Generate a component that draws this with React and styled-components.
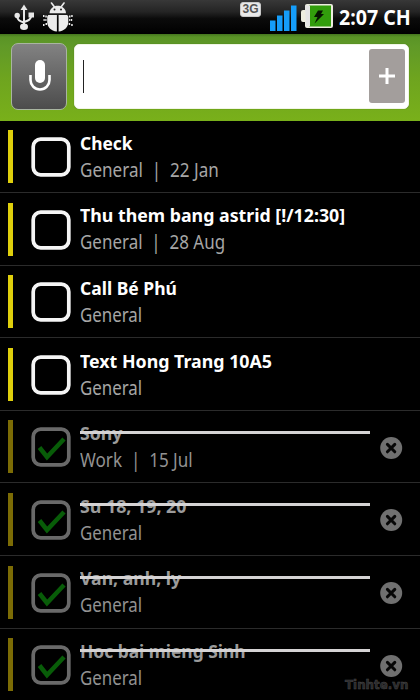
import React from "react";
import styled, { createGlobalStyle } from "styled-components";

const GlobalStyle = createGlobalStyle`
  * { box-sizing: border-box; }
  body { margin: 0; background: #000; overflow: hidden; }
`;

const Screen = styled.main`
  position: relative;
  width: 420px;
  height: 700px;
  overflow: hidden;
  background: #000;
  color: #fff;
  font-family: "Noto Sans", "Open Sans", sans-serif;
`;

const StatusBar = styled.header`
  display: flex;
  align-items: flex-start;
  height: 34px;
  padding-left: 14px;
  background: linear-gradient(#383838 0, #242424 35%, #0b0b0b 55%, #000 100%);
`;

const StatusIcon = styled.svg`
  display: block;
  flex: none;
  width: ${(p) => p.$w}px;
  height: ${(p) => p.$h}px;
  margin: ${(p) => p.$top}px 0 0 ${(p) => p.$left || 0}px;
`;

const NetworkBadge = styled.div`
  width: 21px;
  height: 15px;
  margin: 2px 0 0 167px;
  border: 1px solid #c9c9c9;
  border-radius: 3px;
  background: #e9e9e9;
  color: #555;
  font: bold 12px/13px "Liberation Sans", sans-serif;
  text-align: center;
`;

const Clock = styled.time`
  margin: 3px 0 0 6px;
  font-size: 20.5px;
  line-height: 28px;
  font-weight: 700;
  white-space: nowrap;
  transform: scaleX(${(p) => p.$fit});
  transform-origin: left;
`;

const QuickAdd = styled.section`
  display: flex;
  height: 86.5px;
  padding: 9px 11px 0;
  gap: 7px;
  background: linear-gradient(#45751f 0, #5a9426 3px, #609928 12px, #6ea41f 50%, #79b01a 100%);
`;

const VoiceButton = styled.button`
  display: flex;
  align-items: center;
  justify-content: center;
  width: 56px;
  height: 67px;
  padding: 0 0 2px 1px;
  border: 1.5px solid #a9b5a1;
  border-radius: 7px;
  background: linear-gradient(#828282, #4c4c4c);
`;

const InputBox = styled.div`
  display: flex;
  align-items: center;
  justify-content: space-between;
  width: 335px;
  height: 65px;
  margin-top: 1px;
  padding: 0 3px 1px 8px;
  border: 1px solid #f0f5e5;
  border-radius: 5px;
  background: #fff;
  box-shadow: 0 0 1px #3f6912;
`;

const Caret = styled.span`
  width: 1px;
  height: 33px;
  background: #222;
`;

const AddButton = styled.button`
  display: flex;
  align-items: center;
  justify-content: center;
  width: 36px;
  height: 54px;
  padding: 0;
  border: 0;
  border-radius: 3px;
  background: #a39e9c;
`;

const TaskList = styled.ul`
  margin: 0;
  padding: 0;
  list-style: none;
`;

const TaskRow = styled.li`
  display: flex;
  height: 72.6px;
  padding-left: 8px;
  border-bottom: 1px solid #2b2b2b;
`;

const Priority = styled.span`
  width: 5px;
  height: 53px;
  margin-top: 9.5px;
  background: ${(p) => (p.$done ? "#7c6c05" : "#dfcf0c")};
`;

const CheckIcon = styled.svg`
  width: 40px;
  height: 40px;
  margin: 16.5px 0 0 17.5px;
`;

const TaskBody = styled.div`
  position: relative;
  width: 290px;
  margin-left: 9.5px;
  padding-top: 8.3px;
`;

const Title = styled.div`
  width: max-content;
  font-size: 18.5px;
  line-height: 27px;
  font-weight: 700;
  white-space: pre;
  color: ${(p) => (p.$done ? "#9b9b9b" : "#fff")};
  transform: scaleX(${(p) => p.$fit});
  transform-origin: left;
`;

const Meta = styled.div`
  width: max-content;
  font-size: 19.3px;
  line-height: 27px;
  white-space: pre;
  color: ${(p) => (p.$done ? "#929292" : "#a6a6a6")};
  transform: scaleX(${(p) => p.$fit});
  transform-origin: left;
`;

const Strike = styled.span`
  position: absolute;
  top: 20px;
  left: 0;
  width: 290px;
  height: 3px;
  background: #d5d3d4;
`;

const RemoveIcon = styled.svg`
  width: 24px;
  height: 24px;
  margin: 25px 0 0 9px;
`;

const Watermark = styled.div`
  position: absolute;
  left: 345px;
  top: 675px;
  color: #29292b;
  font: bold 12.5px/20px "DejaVu Sans", sans-serif;
  -webkit-text-stroke: 0.5px #484848;
  transform: scaleX(${(p) => p.$fit});
  transform-origin: left;
`;

const tasks = [
  { title: "Check", meta: "General  |  22 Jan", tf: 0.938, mf: 0.885 },
  { title: "Thu them bang astrid [!/12:30]", meta: "General  |  28 Aug", tf: 0.96, mf: 0.88 },
  { title: "Call Bé Phú", meta: "General", tf: 0.945, mf: 0.875 },
  { title: "Text Hong Trang 10A5", meta: "General", tf: 0.962, mf: 0.875 },
  { title: "Sony", meta: "Work  |  15 Jul", done: true, tf: 0.955, mf: 0.885 },
  { title: "Su 18, 19, 20", meta: "General", done: true, tf: 0.962, mf: 0.875 },
  { title: "Van, anh, ly", meta: "General", done: true, tf: 0.952, mf: 0.875 },
  { title: "Hoc bai mieng Sinh", meta: "General", done: true, tf: 0.94, mf: 0.875 },
];

function Usb() {
  return (
    <StatusIcon $w={20} $h={27} $top={4} viewBox="0 0 20 27" fill="none" stroke="#e8e8e8" strokeWidth="2">
      <path d="M10 4v19M3.300 12c0 4 2.200 5 6.700 6.500M17.300 11c0 4.500-3 5.500-7.300 7" />
      <path d="M10 .5 13.500 6h-7z" fill="#e8e8e8" stroke="none" />
      <circle cx="3.200" cy="11.500" r="2.700" fill="#e8e8e8" stroke="none" />
      <path d="M14.500 8.500H20v5h-5.500z" fill="#e8e8e8" stroke="none" />
      <ellipse cx="10" cy="22.700" rx="4" ry="3.300" fill="#e8e8e8" stroke="none" />
    </StatusIcon>
  );
}

function DebugBug() {
  return (
    <StatusIcon $w={30} $h={30} $top={2} $left={9} viewBox="0 0 30 30" fill="#ececec">
      <path d="M8.500 1l3 4M21 1l-3 4" stroke="#ececec" strokeWidth="1.600" strokeLinecap="round" />
      <path d="M6.500 11.300C7 1.300 22.500 1.300 23 11.300z" />
      <circle cx="11.500" cy="7.500" r="1" fill="#222" />
      <circle cx="18" cy="7.500" r="1" fill="#222" />
      <path d="M5.300 13h8.600v16.500C8 29 4.200 25 4.200 20v-5.500zM15.600 13h8.600l1.100 1.500V20c0 5-3.800 9-9.700 9.500z" />
      <path d="M0 13h1.500v2H0zM2.300 13.500h1.500v2H2.300zM.5 17h1.200v2H.5zM2.300 17h1.200v2H2.300zM0 22h1.500v2H0zM2.500 21h1.500v2H2.500zM28.200 13h1.500v2h-1.500zM26 13.500h1.500v2H26zM28 17h1.200v2H28zM26.200 17h1.200v2h-1.200zM28.200 22h1.500v2h-1.500zM25.700 21h1.500v2h-1.500z" />
    </StatusIcon>
  );
}

function Signal() {
  return (
    <StatusIcon $w={27} $h={27} $top={5} $left={9} viewBox="0 0 27 27" fill="#159dfa">
      <path d="M0 15.500h5.500V26H0zM7 10.500h5.500V26H7zM14 5.500h5.500V26H14zM21 .5h5.500V26H21z" />
    </StatusIcon>
  );
}

function Battery() {
  return (
    <StatusIcon $w={32} $h={26} $top={3} $left={3.5} viewBox="0 0 32 26">
      <path d="M6 1h24q2 0 2 2v20q0 2-2 2H6q-2 0-2-2v-4H2q-2 0-2-2V9q0-2 2-2h2V3q0-2 2-2z" fill="#ededdf" />
      <path d="M8 2.500h22v21H8z" fill="#329d0c" />
      <path d="M4 2.500h5v21H5z" fill="#e5e5e5" />
      <path d="M17 7.500h5l-2 3.500h3l-9.500 9.500 3-6.500H13z" fill="#061501" />
    </StatusIcon>
  );
}

function Checkbox({ done }) {
  return (
    <CheckIcon viewBox="0 0 40 40" fill="none" aria-hidden="true">
      <rect x="2.200" y="2.200" width="35.600" height="35.600" rx="7.500" stroke={done ? "#696969" : "#f5f5f5"} strokeWidth="3.700" />
      {done && <path d="M8.500 20.500l7.500 9.500L33 12" stroke="#085c08" strokeWidth="4.500" />}
    </CheckIcon>
  );
}

function Remove() {
  return (
    <RemoveIcon viewBox="0 0 24 24">
      <circle cx="12.200" cy="12" r="11" fill="#707070" />
      <path d="M8.400 8.400l7.400 7.400M15.800 8.400l-7.400 7.400" stroke="#070707" strokeWidth="3" strokeLinecap="round" />
    </RemoveIcon>
  );
}

export default function App() {
  return (
    <Screen>
      <GlobalStyle />
      <StatusBar>
        <Usb />
        <DebugBug />
        <NetworkBadge>3G</NetworkBadge>
        <Signal />
        <Battery />
        <Clock $fit={0.955}>2:07 CH</Clock>
      </StatusBar>
      <QuickAdd>
        <VoiceButton aria-label="Voice input">
          <svg width="24" height="34" viewBox="0 0 24 34" fill="none">
            <rect x="7" y="1" width="10" height="23" rx="5" fill="#fff" />
            <path d="M2.500 16v5c0 5 4 9.500 9.500 9.500s9.500-4.500 9.500-9.500v-5" stroke="#fff" strokeWidth="2.600" />
          </svg>
        </VoiceButton>
        <InputBox>
          <Caret />
          <AddButton aria-label="Add task">
            <svg width="18" height="18" viewBox="0 0 18 18">
              <path d="M9 1v16M1 9h16" stroke="#fff" strokeWidth="3" />
            </svg>
          </AddButton>
        </InputBox>
      </QuickAdd>
      <TaskList>
        {tasks.map((t) => (
          <TaskRow key={t.title}>
            <Priority $done={t.done} />
            <Checkbox done={t.done} />
            <TaskBody>
              <Title $done={t.done} $fit={t.tf}>{t.title}</Title>
              <Meta $done={t.done} $fit={t.mf}>{t.meta}</Meta>
              {t.done && <Strike />}
            </TaskBody>
            {t.done && <Remove />}
          </TaskRow>
        ))}
      </TaskList>
      <Watermark $fit={0.95}>Tinhte.vn</Watermark>
    </Screen>
  );
}
